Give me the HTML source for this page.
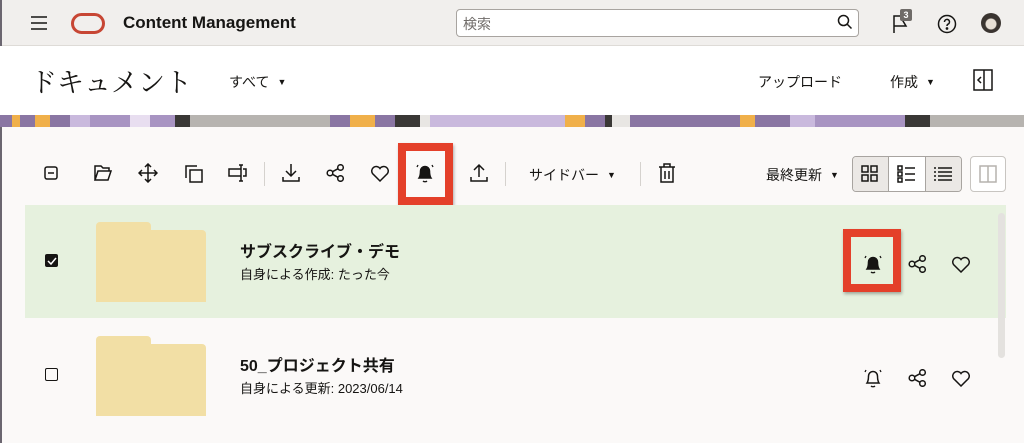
<!DOCTYPE html>
<html><head><meta charset="utf-8"><style>
*{box-sizing:border-box;margin:0;padding:0}
body{width:1024px;height:443px;overflow:hidden;background:#fbf9f8;font-family:"Liberation Sans","Noto Sans CJK JP",sans-serif;color:#161513;position:relative}
.abs{position:absolute}
svg{position:absolute;fill:none;stroke:#161513;stroke-width:1.5}
.hdr{left:0;top:0;width:1024px;height:46px;background:#f1efed;border-bottom:1px solid #dedbd7}
.title{left:0;top:46px;width:1024px;height:69px;background:#fff}
.banner{left:0;top:115px;width:1024px;height:12px;background:linear-gradient(90deg,#8a76a3 0 12px,#f0b04a 12px 20px,#8a76a3 20px 35px,#f0b04a 35px 50px,#8a76a3 50px 70px,#c9b9dd 70px 90px,#a894c2 90px 130px,#e8def0 130px 150px,#a894c2 150px 175px,#3a3836 175px 190px,#b7b4b0 190px 330px,#8a76a3 330px 350px,#f0b04a 350px 375px,#8a76a3 375px 395px,#3a3836 395px 420px,#e8e6e3 420px 430px,#c9b9dd 430px 565px,#f0b04a 565px 585px,#8a76a3 585px 605px,#3a3836 605px 612px,#e8e6e3 612px 630px,#8a76a3 630px 740px,#f0b04a 740px 755px,#8a76a3 755px 790px,#c9b9dd 790px 815px,#a894c2 815px 905px,#3a3836 905px 930px,#b7b4b0 930px)}
.lb{left:0;top:0;width:2px;height:443px;background:#6b6670}
.t{position:absolute;white-space:nowrap}
.row1{left:25px;top:205px;width:981px;height:113px;background:#e6f1de}
.fold{position:absolute;width:110px;height:80px}
.fold:before{content:"";position:absolute;left:0;top:0;width:55px;height:20px;background:#f2dfa5;border-radius:4px 4px 0 0}
.fold:after{content:"";position:absolute;left:0;top:8px;width:110px;height:72px;background:#f2dfa5;border-radius:0 4px 0 0}
.red{position:absolute;border:8px solid #e4402a;box-shadow:1px 2px 3px rgba(0,0,0,.3)}
.cb{position:absolute;width:13px;height:13px;border:1.6px solid #161513;border-radius:2px}
.ar{font-size:9px;margin-left:8px;vertical-align:2px}
</style></head><body>
<div class="abs hdr"></div>
<div class="abs lb"></div>
<svg style="left:30px;top:15px" width="18" height="16"><path d="M1 2h16M1 8h16M1 14h16"/></svg>
<div class="abs" style="left:71px;top:13px;width:34px;height:21px;border:3.5px solid #c74634;border-radius:11px"></div>
<div class="t" style="left:123px;top:13px;font-size:17px;font-weight:bold">Content Management</div>
<div class="abs" style="left:456px;top:9px;width:403px;height:28px;background:#fff;border:1px solid #a8a4a0;border-radius:4px"></div>
<div class="t" style="left:463px;top:14px;font-size:14px;color:#6f6b68">検索</div>
<svg style="left:837px;top:14px" width="16" height="16"><circle cx="6.5" cy="6.5" r="5"/><path d="M10 10l4.5 4.5"/></svg>
<svg style="left:892px;top:14px" width="20" height="20"><path d="M2 19V2h12l-3 5 3 5H2"/></svg>
<div class="abs" style="left:900px;top:9px;width:12px;height:12px;background:#6f6b68;border-radius:2px;color:#fff;font-size:9px;font-weight:bold;text-align:center;line-height:12px">3</div>
<svg style="left:937px;top:14px" width="20" height="20"><circle cx="10" cy="10" r="8.5"/><path d="M7.5 8a2.5 2.5 0 1 1 3.5 2.2c-.8.4-1 1-1 1.8"/><circle cx="10" cy="14.5" r=".6" fill="#161513"/></svg>
<div class="abs" style="left:981px;top:13px;width:20px;height:20px;border-radius:50%;background:radial-gradient(circle at 50% 55%,#e8e0d6 0 5px,#3a3430 6px)"></div>
<div class="abs title"></div>
<div class="t" style="left:30px;top:61px;font-size:27px;font-family:'Noto Serif CJK SC',serif">ドキュメント</div>
<div class="t" style="left:229px;top:72px;font-size:14px">すべて<span class="ar">▼</span></div>
<div class="t" style="left:758px;top:72px;font-size:14px">アップロード</div>
<div class="t" style="left:890px;top:72px;font-size:14px">作成<span class="ar">▼</span></div>
<svg style="left:973px;top:69px" width="20" height="22"><rect x="1" y="1" width="18" height="20"/><path d="M11 1v20M8 8l-3 3 3 3"/></svg>
<div class="abs banner"></div>
<!-- toolbar -->
<svg style="left:44px;top:166px" width="14" height="14"><rect x="1" y="1" width="12" height="12" rx="2"/><path d="M4 7h6"/></svg>
<svg style="left:93px;top:164px" width="20" height="18"><path d="M2 16V2h6l2 2h6v3M2 16l3-9h13l-3 9z"/></svg>
<svg style="left:138px;top:163px" width="20" height="20"><path d="M10 1v18M1 10h18M7 4l3-3 3 3M7 16l3 3 3-3M4 7l-3 3 3 3M16 7l3 3-3 3"/></svg>
<svg style="left:184px;top:164px" width="20" height="19"><path d="M2 14V2h11"/><rect x="6" y="6" width="12" height="12"/></svg>
<svg style="left:228px;top:163px" width="20" height="20"><path d="M13 6H1v7h12M13 2v16M11 2h4M11 18h4M15 6h3v7h-3"/></svg>
<div class="abs" style="left:264px;top:162px;width:1px;height:24px;background:#d5d2ce"></div>
<svg style="left:281px;top:163px" width="20" height="20"><path d="M10 1v12M5 8l5 5 5-5M2 14v4h16v-4"/></svg>
<svg style="left:326px;top:164px" width="20" height="18"><circle cx="4" cy="9" r="2.8"/><circle cx="14.5" cy="3.5" r="2.8"/><circle cx="14.5" cy="14.5" r="2.8"/><path d="M6.5 7.7l5.5-3M6.5 10.3l5.5 3"/></svg>
<svg style="left:370px;top:165px" width="20" height="17"><path d="M10 16L2.5 8.5a4.2 4.2 0 0 1 7.5-5 4.2 4.2 0 0 1 7.5 5z"/></svg>
<div class="red" style="left:398px;top:143px;width:55px;height:62px"></div>
<svg style="left:414px;top:162px" width="22" height="22"><path d="M5 16c1-1.5 1.5-3 1.5-7a4.5 4.5 0 0 1 9 0c0 4 .5 5.5 1.5 7z" fill="#161513"/><path d="M9 19c1 1 3 1 4 0M3 5l1-2M19 5l-1-2" stroke-width="1.3"/></svg>
<svg style="left:469px;top:163px" width="20" height="20"><path d="M10 14V2M5 7l5-5 5 5M2 14v4h16v-4"/></svg>
<div class="abs" style="left:505px;top:162px;width:1px;height:24px;background:#d5d2ce"></div>
<div class="t" style="left:529px;top:165px;font-size:14px">サイドバー<span class="ar">▼</span></div>
<div class="abs" style="left:640px;top:162px;width:1px;height:24px;background:#d5d2ce"></div>
<svg style="left:658px;top:163px" width="18" height="20"><path d="M1 4h16M6 4V1h6v3M3 4v15h12V4M7 8v8M11 8v8"/></svg>
<div class="t" style="left:766px;top:165px;font-size:14px">最終更新<span class="ar">▼</span></div>
<div class="abs" style="left:852px;top:156px;width:110px;height:36px;border:1px solid #a8a4a0;border-radius:4px;background:#fff;overflow:hidden">
<div class="abs" style="left:0;top:0;width:36px;height:36px;background:#ebe8e5;border-right:1px solid #a8a4a0"></div>
<div class="abs" style="left:72px;top:0;width:38px;height:36px;background:#ebe8e5;border-left:1px solid #a8a4a0"></div>
</div>
<svg style="left:861px;top:165px" width="18" height="18" stroke-width="1.4"><rect x="1" y="1" width="6" height="6"/><rect x="10" y="1" width="6" height="6"/><rect x="1" y="10" width="6" height="6"/><rect x="10" y="10" width="6" height="6"/></svg>
<svg style="left:897px;top:165px" width="20" height="18" stroke-width="1.4"><rect x="1" y="1" width="4" height="4"/><rect x="1" y="7" width="4" height="4"/><rect x="1" y="13" width="4" height="4"/><path d="M8 3h10M8 9h10M8 15h10"/></svg>
<svg style="left:933px;top:166px" width="20" height="16" stroke-width="1.3"><path d="M1 2h2M1 6h2M1 10h2M1 14h2M5 2h14M5 6h14M5 10h14M5 14h14"/></svg>
<div class="abs" style="left:970px;top:156px;width:36px;height:36px;border:1px solid #c8c5c1;border-radius:4px;background:#fff"></div>
<svg style="left:979px;top:165px;stroke:#b5b2ae" width="18" height="18" stroke-width="1.4"><rect x="1" y="1" width="16" height="16"/><path d="M9 1v16"/></svg>
<!-- rows -->
<div class="abs row1"></div>
<div class="abs" style="left:998px;top:213px;width:7px;height:145px;background:#e4e2df;border-radius:4px"></div>
<div class="cb" style="left:45px;top:254px;background:#161513"></div>
<svg style="left:47px;top:256px;stroke:#fff" width="10" height="10" stroke-width="1.8"><path d="M1 5l3 3 5-6"/></svg>
<div class="fold" style="left:96px;top:222px"></div>
<div class="t" style="left:240px;top:238px;font-size:16px;font-weight:bold">サブスクライブ・デモ</div>
<div class="t" style="left:240px;top:264px;font-size:13px">自身による作成: たった今</div>
<div class="red" style="left:843px;top:229px;width:58px;height:63px"></div>
<svg style="left:862px;top:253px" width="22" height="22"><path d="M5 16c1-1.5 1.5-3 1.5-7a4.5 4.5 0 0 1 9 0c0 4 .5 5.5 1.5 7z" fill="#161513"/><path d="M9 19c1 1 3 1 4 0M3 5l1-2M19 5l-1-2" stroke-width="1.3"/></svg>
<svg style="left:908px;top:255px" width="20" height="18"><circle cx="4" cy="9" r="2.8"/><circle cx="14.5" cy="3.5" r="2.8"/><circle cx="14.5" cy="14.5" r="2.8"/><path d="M6.5 7.7l5.5-3M6.5 10.3l5.5 3"/></svg>
<svg style="left:951px;top:256px" width="20" height="17"><path d="M10 16L2.5 8.5a4.2 4.2 0 0 1 7.5-5 4.2 4.2 0 0 1 7.5 5z"/></svg>
<div class="cb" style="left:45px;top:368px"></div>
<div class="fold" style="left:96px;top:336px"></div>
<div class="t" style="left:240px;top:352px;font-size:16px;font-weight:bold">50_プロジェクト共有</div>
<div class="t" style="left:240px;top:378px;font-size:13px">自身による更新: 2023/06/14</div>
<svg style="left:862px;top:367px" width="22" height="22"><path d="M5 16c1-1.5 1.5-3 1.5-7a4.5 4.5 0 0 1 9 0c0 4 .5 5.5 1.5 7z"/><path d="M9 19c1 1 3 1 4 0M3 5l1-2M19 5l-1-2" stroke-width="1.3"/></svg>
<svg style="left:908px;top:369px" width="20" height="18"><circle cx="4" cy="9" r="2.8"/><circle cx="14.5" cy="3.5" r="2.8"/><circle cx="14.5" cy="14.5" r="2.8"/><path d="M6.5 7.7l5.5-3M6.5 10.3l5.5 3"/></svg>
<svg style="left:951px;top:370px" width="20" height="17"><path d="M10 16L2.5 8.5a4.2 4.2 0 0 1 7.5-5 4.2 4.2 0 0 1 7.5 5z"/></svg>
</body></html>
